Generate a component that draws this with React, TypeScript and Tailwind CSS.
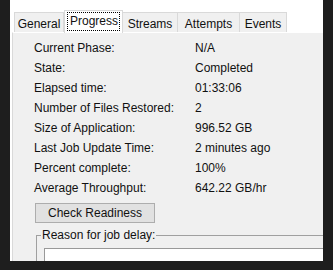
import React from "react";

const tabs = [
  { name: "General", w: "w-[50px]" },
  { name: "Progress", w: "w-[59px]", active: true },
  { name: "Streams", w: "w-[55px]" },
  { name: "Attempts", w: "w-[62px]" },
  { name: "Events", w: "w-[47px]" },
];

const rows = [
  ["Current Phase:", "N/A"],
  ["State:", "Completed"],
  ["Elapsed time:", "01:33:06"],
  ["Number of Files Restored:", "2"],
  ["Size of Application:", "996.52 GB"],
  ["Last Job Update Time:", "2 minutes ago"],
  ["Percent complete:", "100%"],
  ["Average Throughput:", "642.22 GB/hr"],
];

export default function App() {
  return (
    <div
      className="w-[333px] h-[270px] bg-[#1e1e1e] pl-[10px] pr-[10px] pb-[9px] overflow-hidden text-[12px] text-[#111]"
      style={{ fontFamily: '"Liberation Sans", Arial, sans-serif' }}
    >
      <div className="w-full h-full bg-white flex flex-col overflow-hidden">
        {/* tab strip */}
        <div className="h-[32px] flex items-end pl-[4px] shrink-0">
          {tabs.map((t) =>
            t.active ? (
              <div
                key={t.name}
                className={`${t.w} h-[23px] -mb-[1px] relative z-10 bg-white border border-b-0 border-[#d9d9d9] flex items-start justify-center pt-[1px] shrink-0`}
              >
                <span className="border border-dotted border-black px-[2px] h-[19px] leading-[17px] w-[53px] text-center">
                  {t.name}
                </span>
              </div>
            ) : (
              <div
                key={t.name}
                className={`${t.w} h-[20px] bg-[#f0f0f0] border-t border-r border-[#d9d9d9] first:border-l flex items-center justify-center leading-none pt-[2px] shrink-0`}
              >
                {t.name}
              </div>
            )
          )}
        </div>

        {/* panel */}
        <div className="flex-1 ml-[2px] w-[400px] bg-[#f0f0f0] border-l border-t border-l-[#d9d9d9] border-t-white pt-[5px]">
          <div className="pl-[21px]">
            {rows.map(([k, v]) => (
              <div key={k} className="h-[20px] flex items-center">
                <span className="w-[161px]">{k}</span>
                <span>{v}</span>
              </div>
            ))}
          </div>
          <button
            type="button"
            className="ml-[22px] mt-[5px] w-[120px] h-[20px] bg-[#e1e1e1] border border-[#adadad] flex items-center justify-center"
          >
            Check Readiness
          </button>
          <fieldset className="ml-[23px] mt-[5px] border border-[#a0a0a0] pl-[4px] h-[60px]">
            <legend className="px-[1px] leading-[14px]">Reason for job delay:</legend>
            <div className="ml-[3px] mt-[6px] h-[40px] bg-white border-t border-l border-[#999]"></div>
          </fieldset>
        </div>
      </div>
    </div>
  );
}
